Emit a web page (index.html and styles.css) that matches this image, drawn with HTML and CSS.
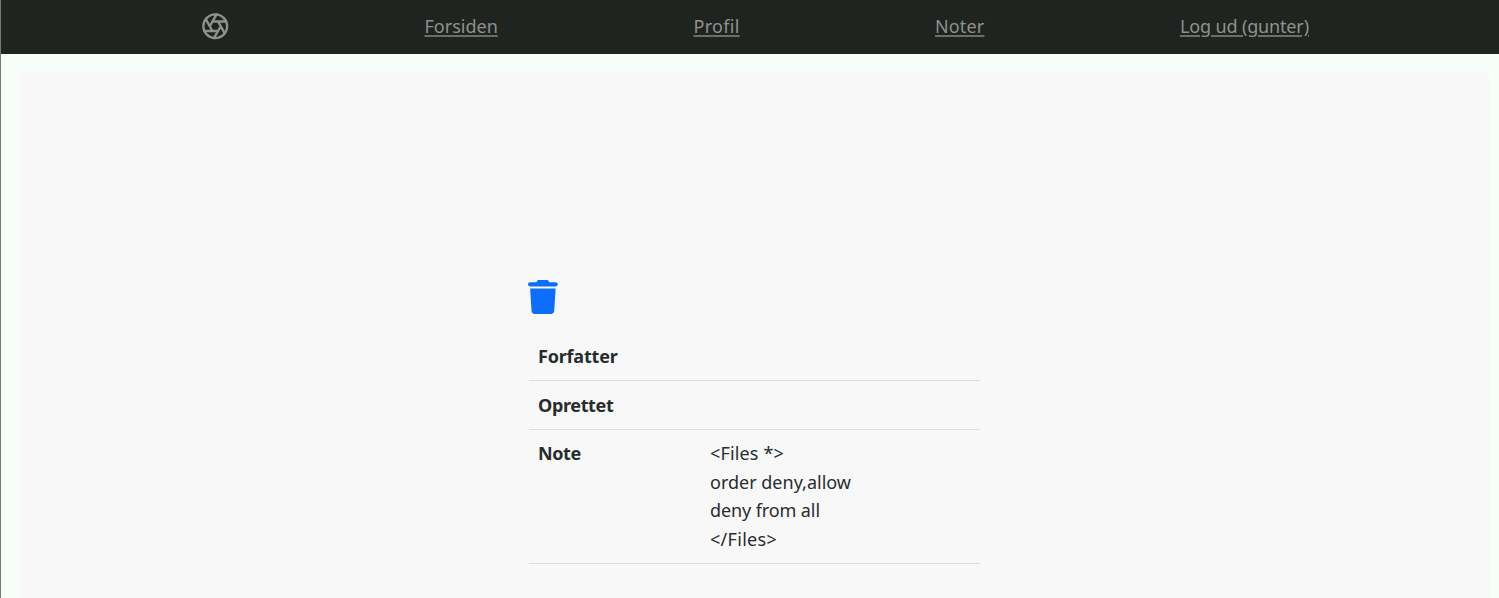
FILE: index.html
```html
<!DOCTYPE html>
<html lang="da">
<head>
<meta charset="utf-8">
<title>Note</title>
<link rel="stylesheet" href="styles.css">
</head>
<body>
<nav class="nav">
  <svg class="logo" viewBox="0 0 24 24" fill="none" stroke="currentColor" stroke-width="2" stroke-linecap="round"><circle cx="12" cy="12" r="10"/><path d="M14.31 8l5.74 9.94M9.69 8h11.48M7.38 12l5.74-9.94M9.69 16L3.95 6.06M14.31 16H2.83M16.62 12l-5.74 9.94"/></svg>
  <a class="link home">Forsiden</a>
  <a class="link profile">Profil</a>
  <a class="link notes">Noter</a>
  <a class="link logout">Log ud (gunter)</a>
</nav>
<main class="page">
  <section class="note">
    <svg class="trash" viewBox="0 0 448 512" fill="currentColor"><path d="M135.2 17.7L128 32H32C14.3 32 0 46.3 0 64S14.3 96 32 96H416c17.7 0 32-14.3 32-32s-14.3-32-32-32H320l-7.2-14.3C307.4 6.8 296.3 0 284.2 0H163.8c-12.1 0-23.2 6.8-28.6 17.7zM416 128H32L53.2 467c1.6 25.3 22.6 45 47.9 45H346.9c25.3 0 46.3-19.7 47.9-45L416 128z"/></svg>
    <div class="row"><b class="author">Forfatter</b></div>
    <div class="row"><b class="created">Oprettet</b></div>
    <div class="row"><b class="label">Note</b><div class="text"><div class="l1">&lt;Files *&gt;</div><div class="l2">order deny,allow</div><div class="l3">deny from all</div><div class="l4">&lt;/Files&gt;</div></div></div>
  </section>
</main>
</body>
</html>
```
FILE: styles.css
```css
* { box-sizing: border-box; }
body {
  margin: 0;
  height: 598px;
  overflow: hidden;
  display: flex;
  flex-direction: column;
  background: #f7fdf9;
  border-left: 1px solid #747a77;
  color: #272d2e;
  font: 18px/28.5px "Noto Sans", sans-serif;
}
.nav {
  flex: none;
  height: 54px;
  padding-left: 199.6px;
  display: flex;
  align-items: center;
  background: #202421;
  color: #90918e;
}
.logo { flex: none; width: 28.5px; height: 28.5px; margin: 0 195.4px 2px 0; }
.link {
  flex: none;
  margin: 0 196px 2px 0;
  white-space: nowrap;
  text-decoration: underline;
  text-decoration-thickness: 2px;
  text-decoration-color: #6c6e6a;
  text-underline-offset: 2px;
}
.home { width: 73px; }
.profile { width: 45.5px; letter-spacing: 0.3px; }
.notes { width: 49px; letter-spacing: 0.15px; }
.logout { width: 129px; margin-right: 0; letter-spacing: -0.15px; }
.page {
  flex: 1;
  margin: 19px 10px 0 19px;
  padding: 207px 0 0 508.5px;
  background: #f8f8f8;
}
.note { width: 451.5px; }
.trash { display: block; width: 29.75px; height: 34px; margin-bottom: 18px; margin-left: -0.4px; color: #0d6efd; }
.row {
  display: flex;
  padding: 9.75px 9.5px 9.5px;
  border-bottom: 1px solid #d8dfde;
}
.row b { width: 172px; font-weight: 700; }
.author { letter-spacing: -0.2px; }
.created { letter-spacing: -0.35px; }
.label { letter-spacing: -0.4px; }
.l1 { letter-spacing: 0.15px; }
.l3 { letter-spacing: -0.1px; }
.l4 { letter-spacing: 0.3px; }
```
